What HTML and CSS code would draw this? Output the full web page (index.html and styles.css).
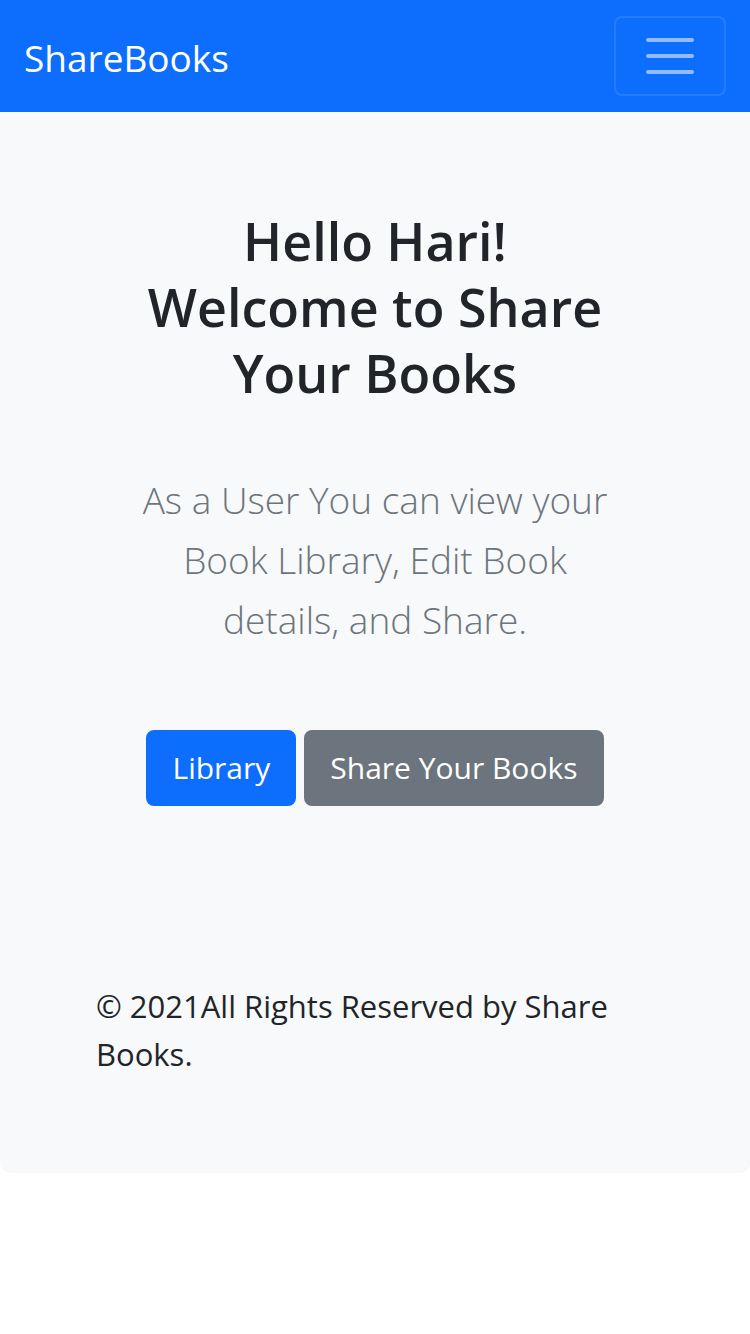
FILE: index.html
```html
<!DOCTYPE html>
<html lang="en">
<head>
<meta charset="utf-8">
<title>ShareBooks</title>
<link rel="stylesheet" href="styles.css">
</head>
<body>
<nav class="navbar">
  <a class="brand" href="#">ShareBooks</a>
  <button class="toggler" type="button" aria-label="Toggle navigation">
    <svg class="toggler-icon" viewBox="0 0 30 30" width="60" height="60"><path d="M4 7h22M4 15h22M4 23h22" stroke="rgba(255,255,255,0.55)" stroke-width="2" stroke-linecap="round" stroke-miterlimit="10" fill="none"/></svg>
  </button>
</nav>
<main class="hero">
  <h1 class="hero-title">Hello Hari!<br>Welcome to Share Your Books</h1>
  <p class="lead">As a User You can view your Book Library, Edit Book details, and Share.</p>
  <div class="actions">
    <a class="btn btn-primary" href="#">Library</a>
    <a class="btn btn-secondary" href="#">Share Your Books</a>
  </div>
  <footer class="footer">© 2021All Rights Reserved by Share Books.</footer>
</main>
</body>
</html>
```
FILE: styles.css
```css
* { box-sizing: border-box; }
html, body { margin: 0; padding: 0; }
body {
  font-family: "Open Sans", "Noto Sans", sans-serif;
  font-size: 31px;
  line-height: 1.5;
  color: #212529;
  background: #fff;
}
.navbar {
  height: 112px;
  background: #0d6efd;
  display: flex;
  align-items: center;
  justify-content: space-between;
  padding: 0 24px;
}
.brand {
  color: #fff;
  text-decoration: none;
  font-size: 37px;
  line-height: 60px;
  padding-top: 4px;
}
.toggler {
  display: flex;
  align-items: center;
  justify-content: center;
  background: transparent;
  border: 2px solid rgba(255,255,255,0.1);
  border-radius: 8px;
  padding: 8px 24px;
  width: 112px;
  height: 80px;
}
.toggler-icon { display: block; }
.hero {
  background: #f8f9fa;
  border-radius: 0 0 10px 10px;
  padding: 96px 96px 95px;
}
.hero-title {
  margin: 0 0 64px;
  text-align: center;
  font-size: 52px;
  line-height: 66px;
  font-weight: 600;
  color: #212529;
}
.lead {
  margin: 0 auto 80px;
  max-width: 500px;
  text-align: center;
  font-size: 37px;
  line-height: 60px;
  font-weight: 300;
  color: #6c757d;
}
.actions {
  display: flex;
  justify-content: center;
  gap: 8px;
  margin-bottom: 176px;
}
.btn {
  display: inline-block;
  font-size: 30px;
  line-height: 48px;
  padding: 12px 24px;
  border: 2px solid transparent;
  border-radius: 8px;
  color: #fff;
  text-decoration: none;
}
.btn-primary { background: #0d6efd; border-color: #0d6efd; }
.btn-secondary { background: #6c757d; border-color: #6c757d; }
.footer {
  font-size: 31px;
  line-height: 48px;
  color: #212529;
}
```
